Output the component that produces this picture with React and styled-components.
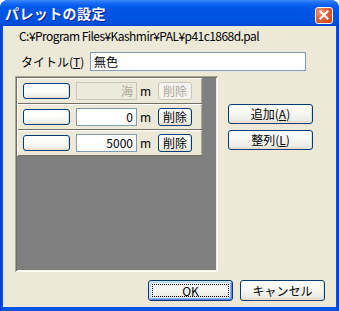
import React from "react";
import styled, { createGlobalStyle } from "styled-components";

const Global = createGlobalStyle`
  html, body { margin: 0; padding: 0; background: #ffffff; }
  body { font-family: "Noto Sans CJK JP", "Liberation Sans", sans-serif; font-size: 12px; color: #000; }
  * { box-sizing: border-box; }
`;

const Window = styled.div`
  width: 339px;
  height: 311px;
  display: flex;
  flex-direction: column;
  border-radius: 8px 8px 0 0;
  background: linear-gradient(to right, #0831d9 0px, #0054e3 2px, #0055e5 calc(100% - 2px), #0831d9 100%);
  overflow: hidden;
`;

const TitleBar = styled.div`
  height: 26px;
  flex: none;
  display: flex;
  align-items: center;
  padding: 0 5px 0 5px;
  background: linear-gradient(
    to bottom,
    #3b8cff 0px,
    #1a6cf7 3px,
    #0058ea 7px,
    #0054e3 14px,
    #0052df 22px,
    #0346d0 26px
  );
`;

const Title = styled.div`
  flex: 1;
  color: #fff;
  font-weight: bold;
  font-size: 14px;
  letter-spacing: 0.4px;
  text-shadow: 1px 1px 0 #0a1e8c;
  line-height: 16px;
  margin-top: 0px;
`;

const CloseButton = styled.div`
  width: 18px;
  height: 17px;
  margin-top: 4px;
  margin-right: 1px;
  border: 1px solid #fff;
  border-radius: 3px;
  background: radial-gradient(circle at 30% 30%, #f09a7a 0%, #e0603a 45%, #c8401c 100%);
  display: flex;
  align-items: center;
  justify-content: center;
`;

const Body = styled.div`
  flex: 1;
  margin: 0 3px 4px;
  background: #ece9d8;
  display: flex;
  flex-direction: column;
`;

const PathText = styled.div`
  margin: 3px 0 0 16px;
  height: 14px;
  line-height: 14px;
  letter-spacing: -0.55px;
  white-space: nowrap;
`;

const TitleRow = styled.div`
  margin-top: 9px;
  padding-left: 18px;
  display: flex;
  align-items: center;
`;

const Label = styled.div`
  width: 69px;
  line-height: 14px;
  white-space: nowrap;
`;

const Edit = styled.input`
  width: ${(p) => p.$w}px;
  height: ${(p) => p.$h}px;
  border: 1px solid ${(p) => (p.disabled ? "#c9c7ba" : "#7f9db9")};
  background: ${(p) => (p.disabled ? "#ebeadb" : "#fff")};
  color: ${(p) => (p.disabled ? "#aca899" : "#000")};
  font-family: "Noto Sans CJK JP", "Liberation Sans", sans-serif;
  font-size: 12px;
  padding: 0 ${(p) => (p.$right ? "3px" : "0")} 0 ${(p) => (p.$right ? "0" : "3px")};
  text-align: ${(p) => (p.$right ? "right" : "left")};
  outline: none;
  margin: 0;
  -webkit-text-fill-color: ${(p) => (p.disabled ? "#aca899" : "#000")};
  opacity: 1;
`;

const Main = styled.div`
  margin-top: 5px;
  padding-left: 12px;
  display: flex;
`;

const Panel = styled.div`
  width: 203px;
  height: 196px;
  padding: 2px;
  background: #808080;
  box-shadow: inset 1px 1px 0 #aca899, inset -1px -1px 0 #ffffff,
    inset 2px 2px 0 #716f64, inset -2px -2px 0 #f1efe2;
  display: flex;
  flex-direction: column;
`;

const Row = styled.div`
  width: 185px;
  height: 26px;
  flex: none;
  background: #ece9d8;
  box-shadow: inset 1px 1px 0 #ffffff, inset 0 -1px 0 #716f64, inset -1px 0 0 #aca899;
  display: flex;
  align-items: center;
  padding: 0 0 1px 6px;
`;

const XPButton = styled.button`
  width: ${(p) => p.$w}px;
  height: ${(p) => p.$h}px;
  flex: none;
  margin: 0;
  padding: 0;
  border: 1px solid ${(p) => (p.disabled ? "#c9c7ba" : "#003c74")};
  border-radius: 3px;
  background: ${(p) =>
    p.disabled
      ? "#f4f3ee"
      : p.$blank
      ? "linear-gradient(to bottom, #ffffff 0%, #fbfbf9 50%, #f1f0ea 85%, #e2ded2 100%)"
      : "linear-gradient(to bottom, #ffffff 0%, #f8f8f5 40%, #ecebe4 85%, #d8d4c8 100%)"};
  box-shadow: ${(p) =>
    p.$default
      ? "inset 1px 1px 0 #cee7ff, inset -1px -1px 0 #6982ee, inset 2px 2px 0 #bcd4f6, inset -2px -2px 0 #89adf4"
      : p.disabled
      ? "none"
      : "inset -1px -1px 0 #e3e0d0"};
  color: ${(p) => (p.disabled ? "#aca899" : "#000")};
  font-family: "Noto Sans CJK JP", "Liberation Sans", sans-serif;
  font-size: 12px;
  line-height: 14px;
  display: flex;
  align-items: center;
  justify-content: center;
  position: relative;
`;

const FocusRect = styled.span`
  position: absolute;
  inset: 3px;
  border: 1px dotted #000;
  pointer-events: none;
`;

const Unit = styled.span`
  width: 21px;
  padding-left: 3px;
  line-height: 14px;
`;

const Side = styled.div`
  margin-left: 10px;
  padding-top: 28px;
  display: flex;
  flex-direction: column;
  gap: 6px;
`;

const Footer = styled.div`
  margin-top: 8px;
  padding-right: 11px;
  display: flex;
  justify-content: flex-end;
  gap: 7px;
`;

const U = styled.span`
  text-decoration: underline;
  text-underline-offset: 1px;
`;

const rows = [
  { value: "海", disabled: true },
  { value: "0", disabled: false },
  { value: "5000", disabled: false },
];

export default function App() {
  return (
    <>
      <Global />
      <Window>
        <TitleBar>
          <Title>パレットの設定</Title>
          <CloseButton>
            <svg width="10" height="10" viewBox="0 0 10 10">
              <path d="M1.5 1.5 L8.5 8.5 M8.5 1.5 L1.5 8.5" stroke="#fff" strokeWidth="2" strokeLinecap="square" />
            </svg>
          </CloseButton>
        </TitleBar>
        <Body>
          <PathText>C:¥Program Files¥Kashmir¥PAL¥p41c1868d.pal</PathText>
          <TitleRow>
            <Label>
              タイトル(<U>T</U>)
            </Label>
            <Edit $w={216} $h={19} value="無色" readOnly />
          </TitleRow>
          <Main>
            <Panel>
              {rows.map((r, i) => (
                <Row key={i}>
                  <XPButton $w={47} $h={16} $blank />
                  <Edit
                    style={{ marginLeft: 6 }}
                    $w={61}
                    $h={18}
                    $right
                    value={r.value}
                    disabled={r.disabled}
                    readOnly
                  />
                  <Unit>m</Unit>
                  <XPButton $w={34} $h={18} disabled={r.disabled}>
                    削除
                  </XPButton>
                </Row>
              ))}
            </Panel>
            <Side>
              <XPButton $w={85} $h={20}>
                追加(<U>A</U>)
              </XPButton>
              <XPButton $w={85} $h={20}>
                整列(<U>L</U>)
              </XPButton>
            </Side>
          </Main>
          <Footer>
            <XPButton $w={85} $h={21} $default>
              OK
              <FocusRect />
            </XPButton>
            <XPButton $w={85} $h={21}>
              キャンセル
            </XPButton>
          </Footer>
        </Body>
      </Window>
    </>
  );
}
